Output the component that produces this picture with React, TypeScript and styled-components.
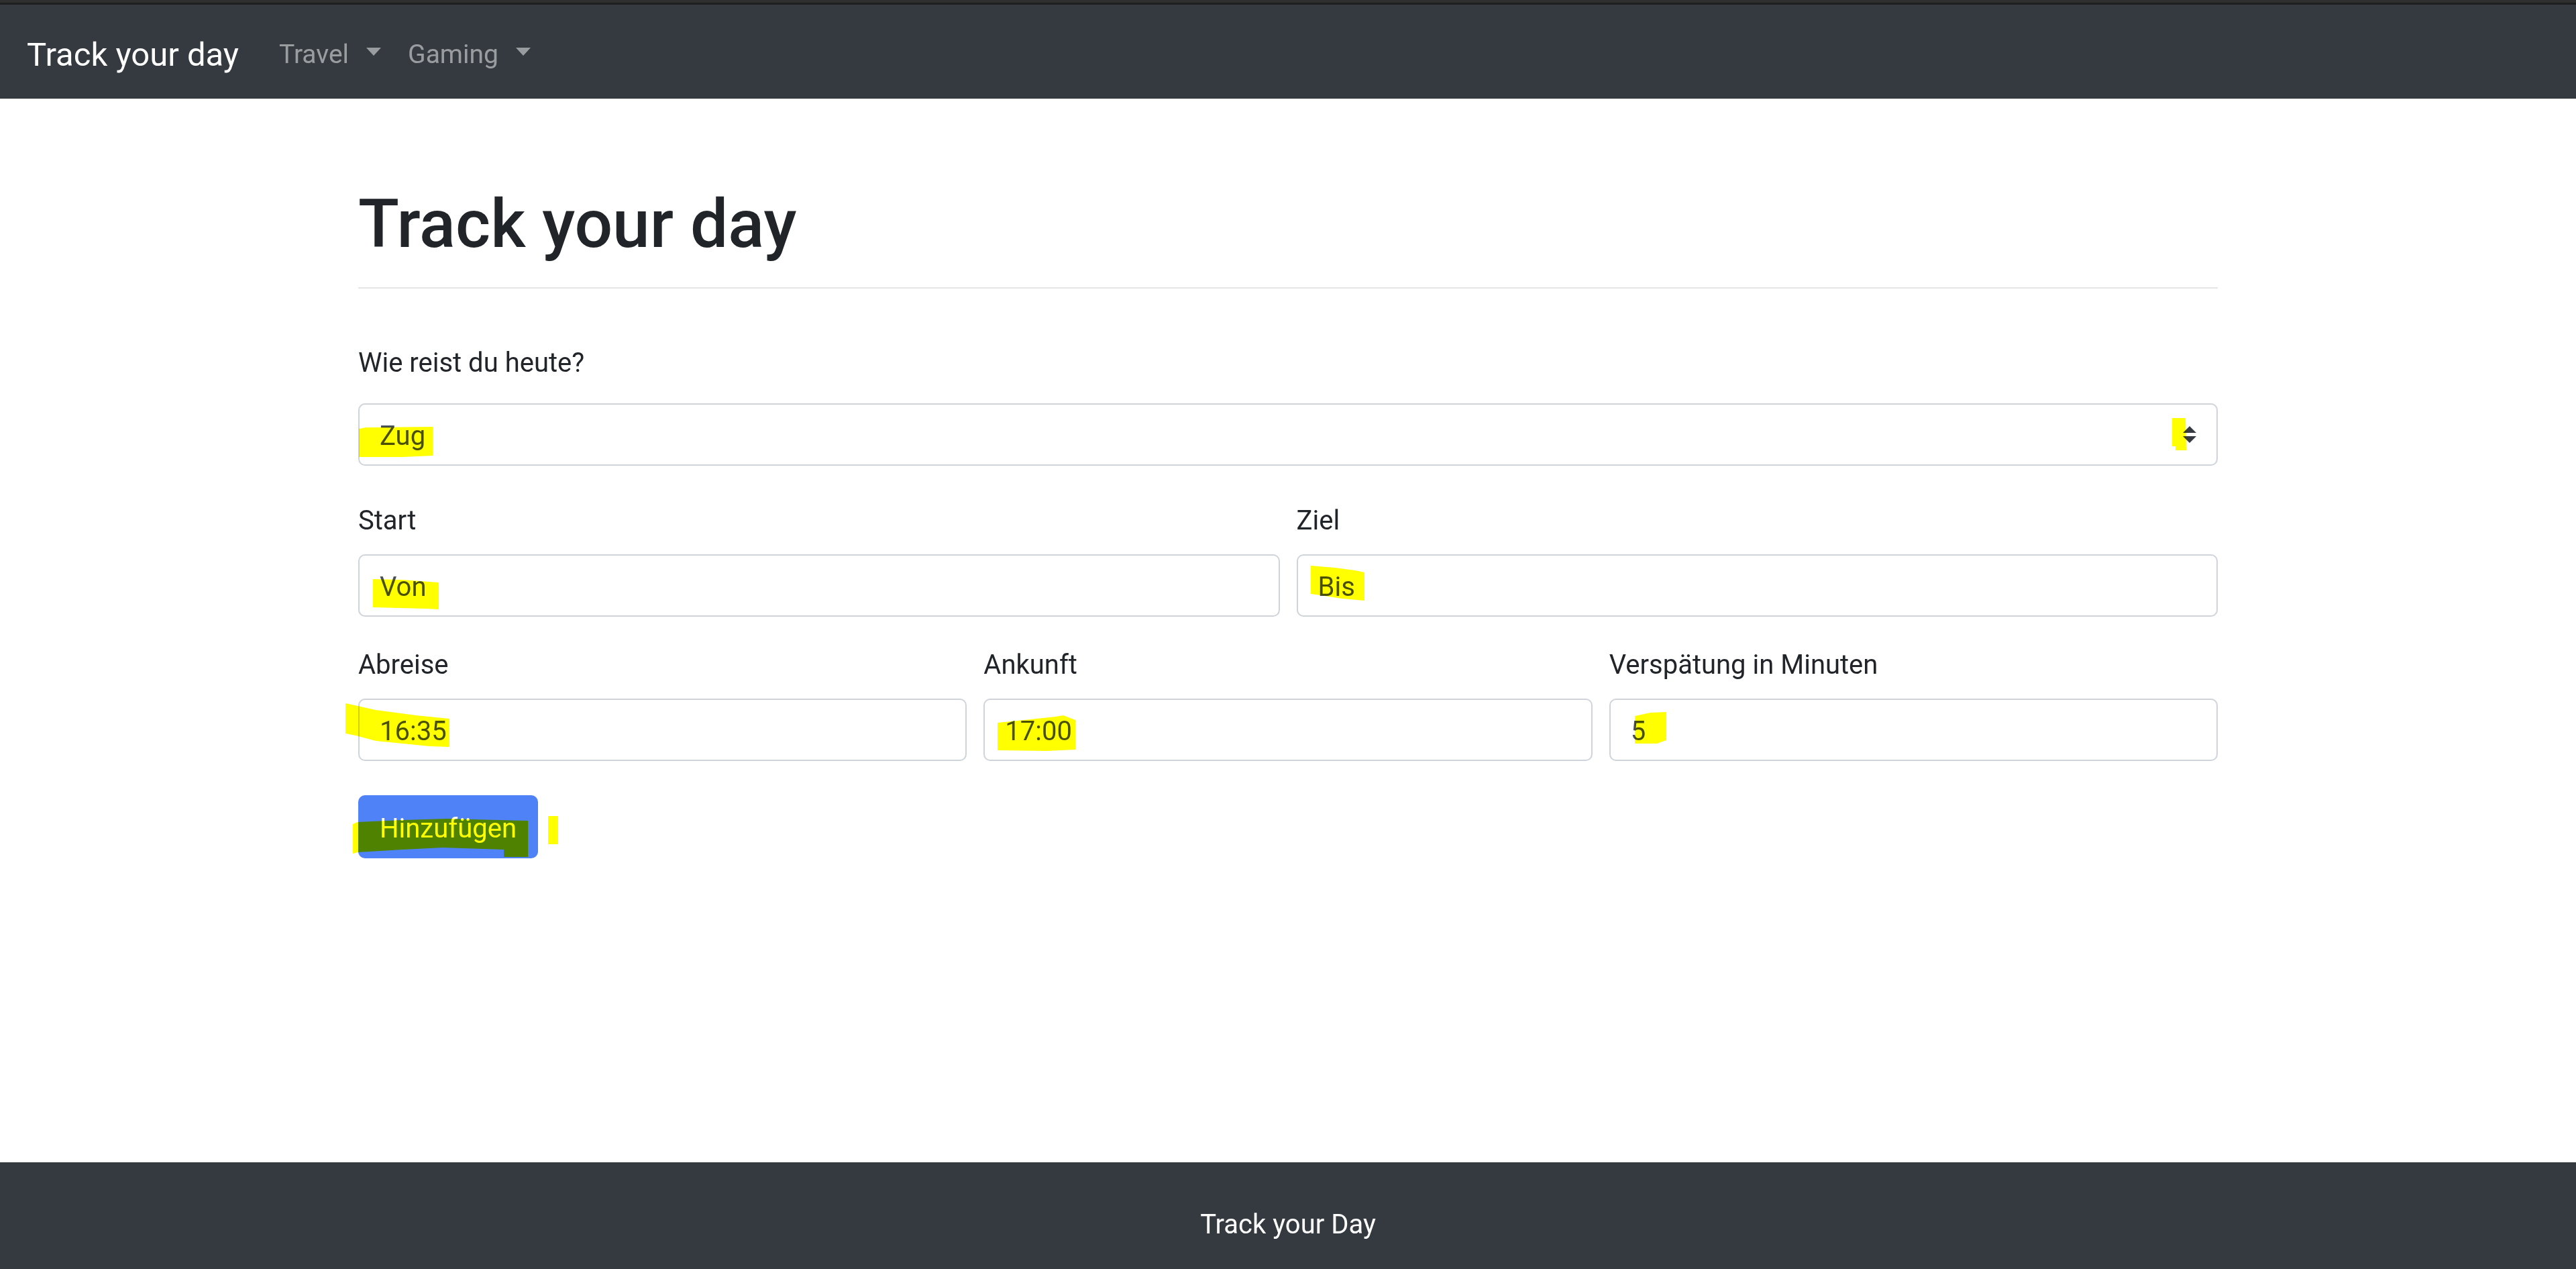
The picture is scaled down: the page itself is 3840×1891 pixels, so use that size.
import React from "react";
import styled, { createGlobalStyle } from "styled-components";

const GlobalStyle = createGlobalStyle`
  html, body {
    margin: 0;
    padding: 0;
    background: #ffffff;
  }
  body {
    font-family: Roboto, "Liberation Sans", Arial, sans-serif;
    color: #212529;
  }
  *, *::before, *::after {
    box-sizing: border-box;
  }
`;

const Page = styled.div`
  position: relative;
  min-height: 100vh;
  display: flex;
  flex-direction: column;
`;

const TopStrip = styled.div`
  height: 7px;
  background: linear-gradient(#2f2f2f 0 4px, #1f1f1f 4px 7px);
`;

const Navbar = styled.nav`
  height: 140px;
  background: #343a40;
  display: flex;
  align-items: flex-start;
  padding: 0 40px;
`;

const Brand = styled.a`
  font-size: 49px;
  line-height: 75px;
  padding-top: 37px;
  margin-right: 40px;
  color: #ffffff;
  text-decoration: none;
  white-space: nowrap;
`;

const NavList = styled.ul`
  list-style: none;
  margin: 0;
  padding: 0;
  display: flex;
`;

const NavLink = styled.a`
  display: flex;
  align-items: flex-start;
  font-size: 39px;
  line-height: 60px;
  padding: 44px 20px 0;
  color: rgba(255, 255, 255, 0.5);
  text-decoration: none;
  white-space: nowrap;
`;

const Caret = styled.span`
  display: inline-block;
  width: 0;
  height: 0;
  margin-left: 26px;
  margin-top: 20px;
  border-top: 12px solid rgba(255, 255, 255, 0.5);
  border-left: 11px solid transparent;
  border-right: 11px solid transparent;
`;

const Main = styled.main`
  flex: 1;
`;

const Container = styled.div`
  width: 2772px;
  margin: 0 auto;
  padding-top: 127px;
`;

const Title = styled.h1`
  margin: 0 0 34px;
  font-size: 100px;
  line-height: 120px;
  font-weight: 500;
  color: #212529;
`;

const Divider = styled.hr`
  margin: 0;
  border: 0;
  height: 2px;
  background: rgba(0, 0, 0, 0.1);
`;

const Form = styled.form`
  padding-top: 81px;
`;

const Group = styled.div<{ $gap: number }>`
  margin-bottom: ${(p) => p.$gap}px;
`;

const Row = styled.div<{ $cols: number; $gap: number }>`
  display: grid;
  grid-template-columns: repeat(${(p) => p.$cols}, 1fr);
  column-gap: 25px;
  margin-bottom: ${(p) => p.$gap}px;
`;

const Label = styled.label<{ $space?: number }>`
  display: block;
  font-size: 40px;
  line-height: 60px;
  margin-bottom: ${(p) => p.$space ?? 20}px;
  color: #212529;
  white-space: nowrap;
`;

const Field = styled.div`
  height: 93px;
  display: flex;
  align-items: center;
  justify-content: space-between;
  padding: 5px 30px 0;
  border: 2.5px solid #ced4da;
  border-radius: 10px;
  background: #ffffff;
  font-size: 40px;
  line-height: 60px;
  color: #495057;
`;

const FieldValue = styled.span`
  white-space: nowrap;
`;

const SelectArrow = styled.svg`
  width: 20px;
  height: 25px;
  flex: none;
  margin-top: -5px;
`;

const Button = styled.button`
  height: 94px;
  padding: 5px 30px 0;
  border: 2.5px solid #4f82f7;
  border-radius: 10px;
  background: #4f82f7;
  color: #ffffff;
  font-family: inherit;
  font-size: 40px;
  line-height: 60px;
  cursor: pointer;
`;

const Footer = styled.footer`
  height: 159px;
  background: #343a40;
  color: #ffffff;
  text-align: center;
  font-size: 40px;
  line-height: 60px;
  padding-top: 63px;
`;

const Highlights = styled.svg`
  position: absolute;
  top: 0;
  left: 0;
  width: 3840px;
  height: 1891px;
  pointer-events: none;
  mix-blend-mode: multiply;
`;

const marks = [
  "535,639 545,637 645,636 645,679 600,681 535,681",
  "3238,623 3258,623 3259,671 3243,671 3243,665 3238,665",
  "556,863 600,864 654,868 654,908 635,907 556,905",
  "1954,843 1990,846 2020,850 2034,853 2034,895 2000,892 1975,888 1954,885",
  "515,1048 560,1058 620,1066 670,1071 670,1113 640,1112 560,1104 530,1096 515,1093",
  "1487,1077 1573,1068 1585,1066 1603,1073 1603,1117 1560,1119 1487,1118",
  "2437,1067 2460,1062 2484,1061 2484,1103 2470,1108 2437,1108",
  "526,1228 533,1225 600,1222 667,1220 787,1223 787,1277 751,1277 751,1266 660,1263 600,1266 533,1270 526,1272",
  "817,1216 832,1216 832,1258 817,1258",
];

export default function App() {
  return (
    <>
      <GlobalStyle />
      <Page>
        <TopStrip />
        <Navbar>
          <Brand href="#">Track your day</Brand>
          <NavList>
            <li>
              <NavLink href="#">
                Travel
                <Caret />
              </NavLink>
            </li>
            <li>
              <NavLink href="#">
                Gaming
                <Caret />
              </NavLink>
            </li>
          </NavList>
        </Navbar>
        <Main>
          <Container>
            <Title>Track your day</Title>
            <Divider />
            <Form onSubmit={(e) => e.preventDefault()}>
              <Group $gap={52}>
                <Label $space={30}>Wie reist du heute?</Label>
                <Field>
                  <FieldValue>Zug</FieldValue>
                  <SelectArrow viewBox="0 0 4 5">
                    <path d="M2 0L0 2h4zm0 5L0 3h4z" fill="#343a40" />
                  </SelectArrow>
                </Field>
              </Group>
              <Row $cols={2} $gap={42}>
                <div>
                  <Label>Start</Label>
                  <Field>
                    <FieldValue>Von</FieldValue>
                  </Field>
                </div>
                <div>
                  <Label>Ziel</Label>
                  <Field>
                    <FieldValue>Bis</FieldValue>
                  </Field>
                </div>
              </Row>
              <Row $cols={3} $gap={51}>
                <div>
                  <Label>Abreise</Label>
                  <Field>
                    <FieldValue>16:35</FieldValue>
                  </Field>
                </div>
                <div>
                  <Label>Ankunft</Label>
                  <Field>
                    <FieldValue>17:00</FieldValue>
                  </Field>
                </div>
                <div>
                  <Label>Verspätung in Minuten</Label>
                  <Field>
                    <FieldValue>5</FieldValue>
                  </Field>
                </div>
              </Row>
              <Button type="submit">Hinzufügen</Button>
            </Form>
          </Container>
        </Main>
        <Footer>Track your Day</Footer>
        <Highlights viewBox="0 0 3840 1891">
          {marks.map((pts, i) => (
            <polygon key={i} points={pts} fill="#ffff00" />
          ))}
        </Highlights>
      </Page>
    </>
  );
}
